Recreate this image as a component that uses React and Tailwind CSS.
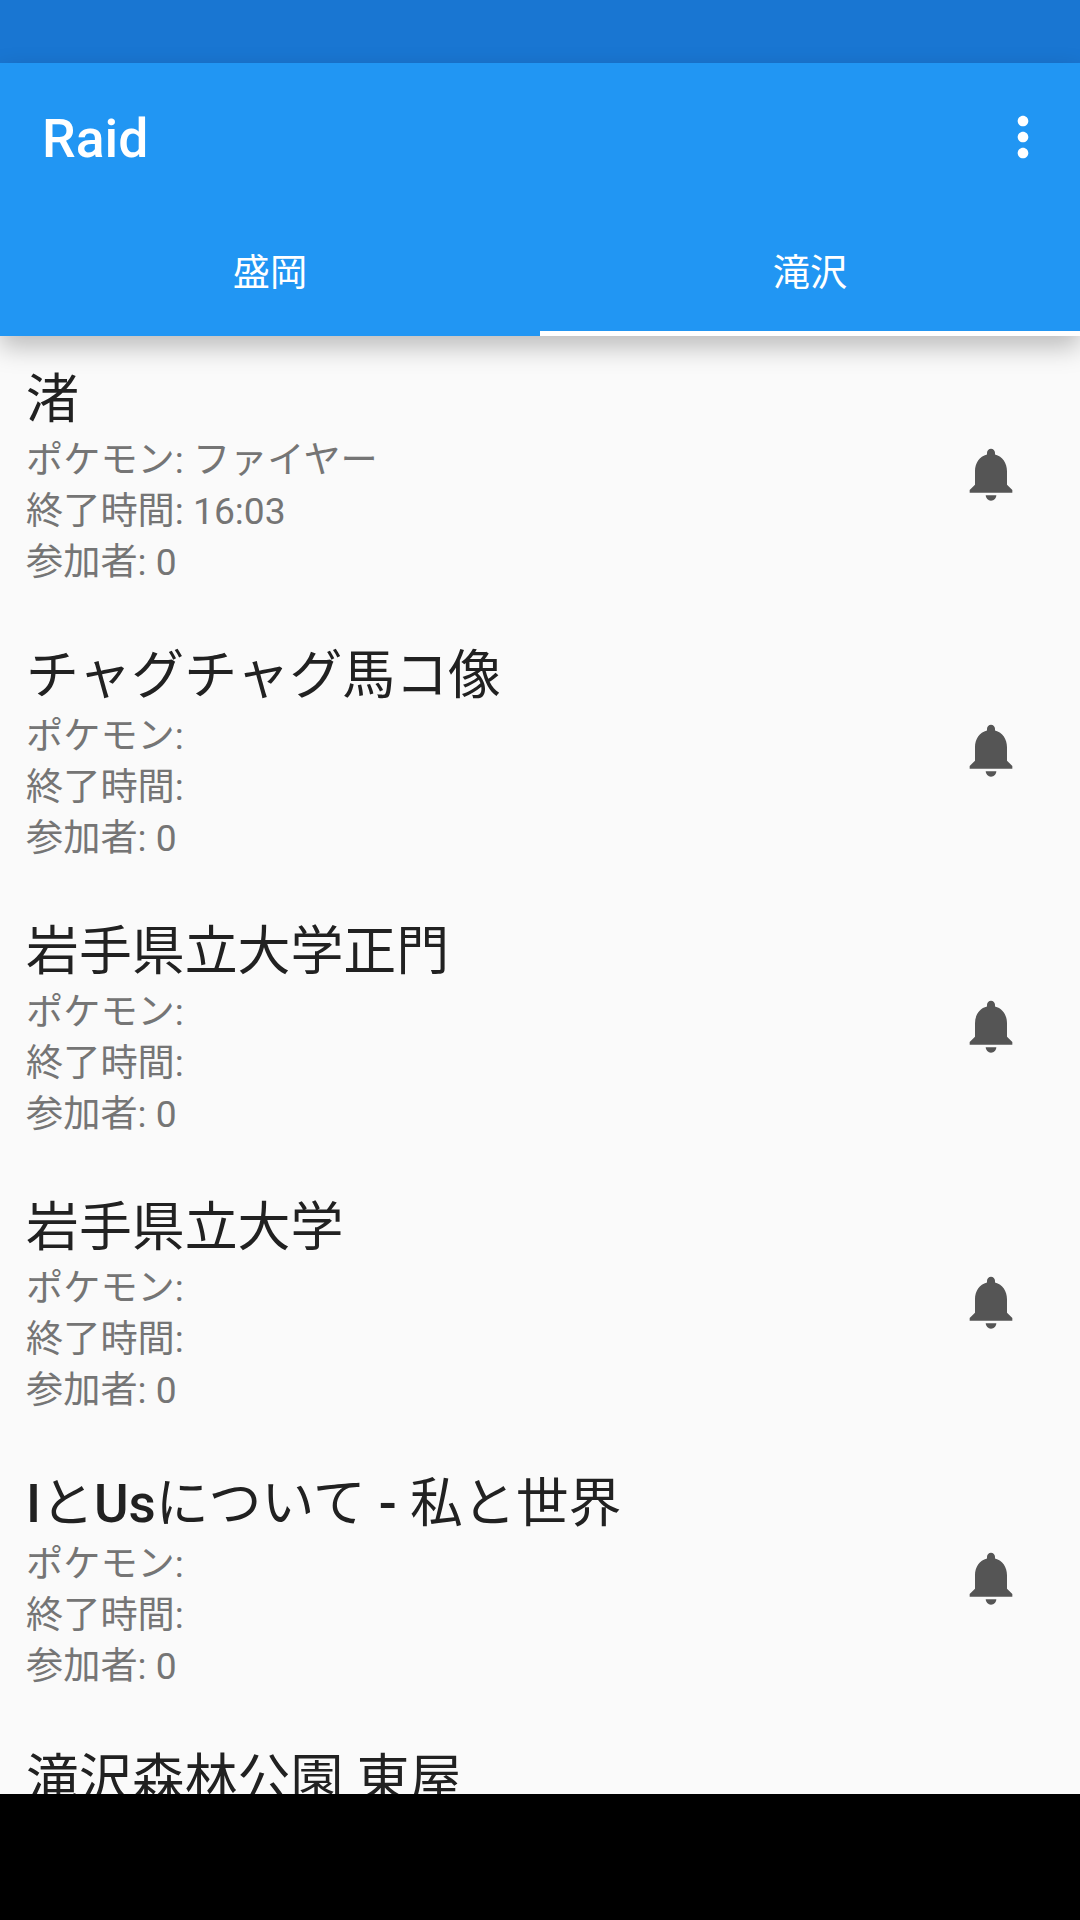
import React from "react";
import { MdMoreVert, MdNotifications } from "react-icons/md";

const fontStack = "font-['Roboto','Noto_Sans_CJK_JP',sans-serif]";

const raids = [
  { title: "渚", pokemon: "ファイヤー", endTime: "16:03" },
  { title: "チャグチャグ馬コ像" },
  { title: "岩手県立大学正門" },
  { title: "岩手県立大学" },
  {
    title: (
      <>
        <span className="font-medium">I</span>と
        <span className="font-medium">Us</span>について{" "}
        <span className="font-medium">-</span> 私と世界
      </>
    ),
  },
  { title: "滝沢森林公園 東屋" },
];

const RaidRow = ({ raid }) => (
  <div className="flex h-[276px] shrink-0 justify-between pl-[26px] pr-[57.5px]">
    <div className="pt-[33px]">
      <div className="text-[52.9px] leading-[62px] text-[#212121] whitespace-nowrap">
        {raid.title}
      </div>
      <div className="mt-1 text-[37.2px] leading-[51px] text-[#757575]">
        <div>ポケモン: {raid.pokemon}</div>
        <div>終了時間: {raid.endTime}</div>
        <div>参加者: 0</div>
      </div>
    </div>
    <div className="flex items-center">
      <MdNotifications className="text-[64px] text-[#555555]" />
    </div>
  </div>
);

const App = () => {
  return (
    <div className={`flex h-[1920px] w-[1080px] flex-col overflow-hidden bg-[#fafafa] ${fontStack}`}>
      <div className="h-[63px] shrink-0 bg-[#1976d2]" />

      <div className="relative z-10 h-[273px] shrink-0 bg-[#2196f3] text-white shadow-[0_11px_24px_rgba(0,0,0,0.25)]">
        <div className="flex h-[149px] items-center justify-between pl-[42px] pr-[25px]">
          <span className="mt-[4px] text-[53.5px] font-medium">Raid</span>
          <MdMoreVert className="mb-[2px] text-[64px]" />
        </div>
        <div className="flex h-[124px]">
          <div className="flex flex-1 items-center justify-center text-[37.2px]">盛岡</div>
          <div className="flex flex-1 items-center justify-center border-b-[5px] border-white pt-[5px] text-[37.2px]">
            滝沢
          </div>
        </div>
      </div>

      <div className="flex flex-1 flex-col overflow-hidden">
        {raids.map((raid, i) => (
          <RaidRow key={i} raid={raid} />
        ))}
      </div>

      <div className="h-[126px] shrink-0 bg-black" />
    </div>
  );
};

export default App;
